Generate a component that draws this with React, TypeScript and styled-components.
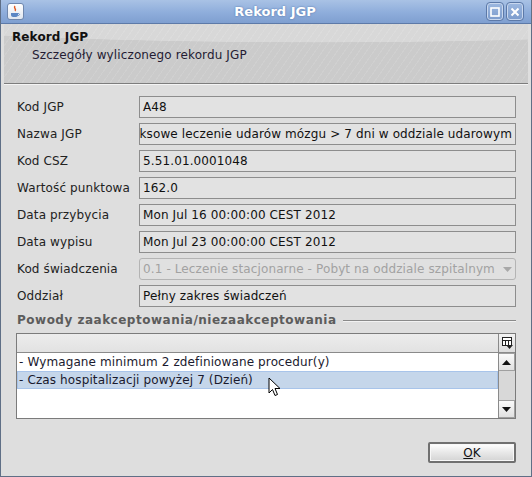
import React from "react";
import styled, { createGlobalStyle } from "styled-components";

const Global = createGlobalStyle`
  html, body { margin: 0; padding: 0; background: #dedede; }
  body { font-family: "DejaVu Sans", "Liberation Sans", sans-serif; font-size: 12px; letter-spacing: 0.12px; }
  * { box-sizing: border-box; }
`;

const Frame = styled.div`
  position: relative;
  width: 532px;
  height: 477px;
  background: #dedede;
  border: 1px solid #5f6f86;
  border-top: none;
  display: flex;
  flex-direction: column;
  overflow: hidden;
`;

const TitleBar = styled.div`
  height: 24px;
  flex: 0 0 24px;
  background: linear-gradient(#a9c2e5, #8eaddb 55%, #7f9fd0);
  border-bottom: 1px solid #5d7aa8;
  display: flex;
  align-items: center;
  padding: 0 8px 0 7px;
  margin: 0 -1px;
`;

const AppIcon = styled.div`
  width: 17px;
  height: 17px;
  border-radius: 3px;
  background: linear-gradient(#ffffff, #dfe6f0);
  border: 1px solid #6f87ad;
  display: flex;
  align-items: center;
  justify-content: center;
`;

const Title = styled.div`
  flex: 1;
  text-align: center;
  color: #ffffff;
  font-weight: bold;
  font-size: 13px;
  letter-spacing: 0;
  text-shadow: 0 0 2px #4a6ea6;
  padding-left: 40px;
`;

const WinButtons = styled.div`
  display: flex;
  gap: 2px;
`;

const WinButton = styled.div`
  width: 18px;
  height: 19px;
  border-radius: 4px;
  border: 1px solid #5c79a8;
  box-shadow: inset 0 0 0 1px #c8d7ee;
  background: linear-gradient(#9db8e0, #7b9bcc);
  display: flex;
  align-items: center;
  justify-content: center;
`;

const Header = styled.div`
  height: 60px;
  flex: 0 0 60px;
  position: relative;
  margin: 0 3px;
  background:
    repeating-linear-gradient(-55deg, rgba(255,255,255,0.10) 0 1px, rgba(0,0,0,0) 1px 6px),
    radial-gradient(ellipse 900px 60px at 60% -18px, #d8d8d8 0 60%, #cbcbcb 61%);
  border-bottom: 1px solid #7d7d7d;
  box-shadow: 0 1px 0 #f4f4f4;
  padding: 6px 0 0 8px;
`;

const HeaderTitle = styled.div`
  font-weight: bold;
  color: #111;
  font-size: 12px;
  line-height: 14px;
`;

const HeaderSub = styled.div`
  color: #241c33;
  font-size: 12px;
  line-height: 14px;
  margin: 4px 0 0 20px;
`;

const Body = styled.div`
  flex: 1;
  margin: 0 3px;
  padding: 12px 12px 0 13px;
  display: flex;
  flex-direction: column;
`;

const Form = styled.div`
  display: grid;
  grid-template-columns: 122px 377px;
  row-gap: 5px;
`;

const Label = styled.div`
  height: 22px;
  display: flex;
  align-items: center;
  color: #222;
`;

const Field = styled.div<{ $end?: boolean }>`
  height: 22px;
  border: 1px solid #8d8d8d;
  background: #e2e2e2;
  color: #111;
  display: flex;
  align-items: center;
  justify-content: ${(p) => (p.$end ? "flex-end" : "flex-start")};
  padding: 0 3px 0 3px;
  white-space: nowrap;
  overflow: hidden;
`;

const FieldText = styled.span`
  flex: 0 0 auto;
`;

const Combo = styled.div`
  height: 22px;
  border: 1px solid #b4b4b4;
  border-radius: 3px;
  background: #e0e0e0;
  color: #a2a2a2;
  display: flex;
  align-items: center;
  padding: 0 3px;
  white-space: nowrap;
  overflow: hidden;
`;

const ComboText = styled.span`
  flex: 1;
`;

const SectionTitle = styled.div`
  display: flex;
  align-items: center;
  gap: 7px;
  margin-top: 5px;
  height: 16px;
  font-weight: bold;
  color: #5c5c5c;
  letter-spacing: 0.5px;
  &::after {
    content: "";
    flex: 1;
    height: 1px;
    background: #8a8a8a;
    box-shadow: 0 1px 0 #f2f2f2;
  }
`;

const Table = styled.div`
  margin: 5px 0 0 -1px;
  width: 500px;
  height: 86px;
  border: 1px solid #7b7b7b;
  background: #ffffff;
  display: flex;
`;

const TableMain = styled.div`
  flex: 1;
  display: flex;
  flex-direction: column;
`;

const TableHeader = styled.div`
  height: 19px;
  background: linear-gradient(#ececec, #e2e2e2);
  border-bottom: 1px solid #8a8a8a;
`;

const Row = styled.div<{ $selected?: boolean }>`
  height: 18px;
  display: flex;
  align-items: center;
  padding-left: 1px;
  color: #1a1a2e;
  background: ${(p) => (p.$selected ? "#c5d6ea" : "#ffffff")};
  border: 1px solid ${(p) => (p.$selected ? "#a8c4ea" : "transparent")};
  white-space: nowrap;
`;

const ScrollBar = styled.div`
  width: 17px;
  display: flex;
  flex-direction: column;
  border-left: 1px solid #8a8a8a;
  background: #dcdcdc;
`;

const Corner = styled.div`
  height: 19px;
  border-bottom: 1px solid #8a8a8a;
  background: linear-gradient(#f2f2f2, #dcdcdc);
  display: flex;
  align-items: center;
  justify-content: center;
`;

const ArrowBtn = styled.div`
  height: 18px;
  background: linear-gradient(#fafafa, #e0e0e0);
  border: 1px solid #a0a0a0;
  border-left: none;
  display: flex;
  align-items: center;
  justify-content: center;
`;

const Track = styled.div`
  flex: 1;
  background: #d8d8d8;
`;

const Footer = styled.div`
  display: flex;
  justify-content: flex-end;
  margin-top: 23px;
`;

const OkButton = styled.button`
  width: 88px;
  height: 21px;
  border: 2px solid #707070;
  border-radius: 2px;
  background: linear-gradient(#ffffff, #e8e8e8 50%, #d4d4d4);
  font-family: "DejaVu Sans", sans-serif;
  font-size: 12px;
  color: #111;
  padding: 0;
  box-shadow: inset 0 0 0 1px #f8f8f8;
`;

const Cursor = styled.svg`
  position: absolute;
  left: 267px;
  top: 377px;
`;

const fields: [string, string, boolean?][] = [
  ["Kod JGP", "A48"],
  ["Nazwa JGP", "Kompleksowe leczenie udarów mózgu > 7 dni w oddziale udarowym", true],
  ["Kod CSZ", "5.51.01.0001048"],
  ["Wartość punktowa", "162.0"],
  ["Data przybycia", "Mon Jul 16 00:00:00 CEST 2012"],
  ["Data wypisu", "Mon Jul 23 00:00:00 CEST 2012"],
];

export default function App() {
  return (
    <>
      <Global />
      <Frame>
        <TitleBar>
          <AppIcon>
            <svg width="11" height="13" viewBox="0 0 11 13">
              <path d="M5 1 C3 3 7 4 5 6" stroke="#e0561b" strokeWidth="1.4" fill="none" />
              <path d="M1 8 h7 v2 c0 1-1 2-2 2 h-3 c-1 0-2-1-2-2z" fill="#5a86c4" />
              <path d="M8 8.5 c2 0 2 2 0 2" stroke="#5a86c4" fill="none" />
            </svg>
          </AppIcon>
          <Title>Rekord JGP</Title>
          <WinButtons>
            <WinButton>
              <svg width="10" height="10" viewBox="0 0 10 10">
                <rect x="1" y="1" width="8" height="8" fill="none" stroke="#fff" strokeWidth="1.6" />
              </svg>
            </WinButton>
            <WinButton>
              <svg width="10" height="10" viewBox="0 0 10 10">
                <path d="M1.5 1.5 L8.5 8.5 M8.5 1.5 L1.5 8.5" stroke="#fff" strokeWidth="2" />
              </svg>
            </WinButton>
          </WinButtons>
        </TitleBar>
        <Header>
          <HeaderTitle>Rekord JGP</HeaderTitle>
          <HeaderSub>Szczegóły wyliczonego rekordu JGP</HeaderSub>
        </Header>
        <Body>
          <Form>
            {fields.map(([l, v, end]) => (
              <React.Fragment key={l}>
                <Label>{l}</Label>
                <Field $end={end}>
                  <FieldText>{v}</FieldText>
                </Field>
              </React.Fragment>
            ))}
            <Label>Kod świadczenia</Label>
            <Combo>
              <ComboText>0.1 - Leczenie stacjonarne - Pobyt na oddziale szpitalnym</ComboText>
              <svg width="9" height="5" viewBox="0 0 9 5">
                <path d="M0 0 H9 L4.5 5z" fill="#a8a8a8" />
              </svg>
            </Combo>
            <Label>Oddział</Label>
            <Field>
              <FieldText>Pełny zakres świadczeń</FieldText>
            </Field>
          </Form>
          <SectionTitle>Powody zaakceptowania/niezaakceptowania</SectionTitle>
          <Table>
            <TableMain>
              <TableHeader />
              <Row>- Wymagane minimum 2 zdefiniowane procedur(y)</Row>
              <Row $selected>- Czas hospitalizacji powyżej 7 (Dzień)</Row>
            </TableMain>
            <ScrollBar>
              <Corner>
                <svg width="11" height="12" viewBox="0 0 11 12">
                  <rect x="0.5" y="0.5" width="9" height="8" fill="#fff" stroke="#222" />
                  <path d="M0.5 3.5 H9.5 M3.5 3.5 V8.5 M6.5 3.5 V8.5" stroke="#222" />
                  <path d="M4 8 H11 L7.5 12z" fill="#222" />
                </svg>
              </Corner>
              <ArrowBtn>
                <svg width="9" height="5" viewBox="0 0 9 5"><path d="M0 5 H9 L4.5 0z" fill="#111" /></svg>
              </ArrowBtn>
              <Track />
              <ArrowBtn>
                <svg width="9" height="5" viewBox="0 0 9 5"><path d="M0 0 H9 L4.5 5z" fill="#111" /></svg>
              </ArrowBtn>
            </ScrollBar>
          </Table>
          <Footer>
            <OkButton>
              <u>O</u>K
            </OkButton>
          </Footer>
        </Body>
        <Cursor width="13" height="21" viewBox="0 0 13 21">
          <path d="M1 1 L1 16 L4.5 12.5 L7 18.5 L9.5 17.5 L7 11.5 L12 11.5 Z" fill="#fff" stroke="#000" strokeWidth="1" strokeLinejoin="round" />
        </Cursor>
      </Frame>
    </>
  );
}
